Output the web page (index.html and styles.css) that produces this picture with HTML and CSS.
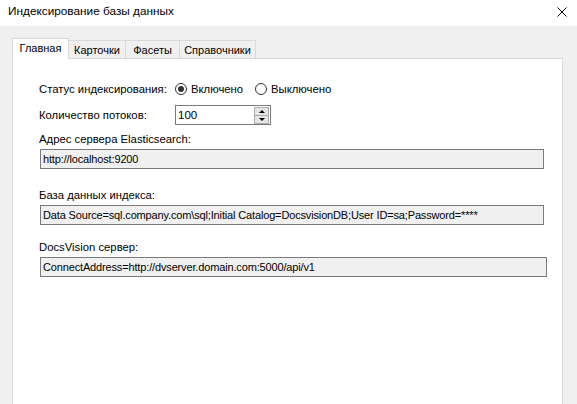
FILE: index.html
```html
<!DOCTYPE html>
<html lang="ru">
<head>
<meta charset="utf-8">
<title>Индексирование базы данных</title>
<link rel="stylesheet" href="styles.css">
</head>
<body>
<div class="window">
  <div class="titlebar">
    <span class="title">Индексирование базы данных</span>
    <svg class="close" width="10" height="10" viewBox="0 0 10 10"><path d="M0.5 0.5 L9.5 9.5 M9.5 0.5 L0.5 9.5" stroke="#000" stroke-width="1" fill="none"/></svg>
  </div>
  <div class="client">
    <div class="tabs">
      <div class="tab active t1">Главная</div>
      <div class="tab t2">Карточки</div>
      <div class="tab t3">Фасеты</div>
      <div class="tab t4">Справочники</div>
      <div class="tab-fill"></div>
    </div>
    <div class="panel">
      <div class="row status">
        <span class="lbl">Статус индексирования:</span>
        <span class="radio r1"><span class="circle checked"></span><span>Включено</span></span>
        <span class="radio r2"><span class="circle"></span><span>Выключено</span></span>
      </div>
      <div class="row threads">
        <span class="lbl">Количество потоков:</span>
        <div class="spin">
          <span class="spin-val">100</span>
          <div class="spin-btns">
            <div class="spin-btn"><span class="arrow up"></span></div>
            <div class="spin-btn"><span class="arrow down"></span></div>
          </div>
        </div>
      </div>
      <div class="field f1">
        <div class="flabel">Адрес сервера Elasticsearch:</div>
        <div class="tbox">http://localhost:9200</div>
      </div>
      <div class="field f2">
        <div class="flabel">База данных индекса:</div>
        <div class="tbox">Data Source=sql.company.com\sql;Initial Catalog=DocsvisionDB;User ID=sa;Password=****</div>
      </div>
      <div class="field f3">
        <div class="flabel">DocsVision сервер:</div>
        <div class="tbox wide">ConnectAddress=http://dvserver.domain.com:5000/api/v1</div>
      </div>
    </div>
  </div>
</div>
</body>
</html>
```
FILE: styles.css
```css
html, body {
  margin: 0;
  padding: 0;
  width: 577px;
  height: 404px;
  overflow: hidden;
  background: #f0f0f0;
}
body {
  font-family: "Liberation Sans", Arial, sans-serif;
  font-size: 11.3px;
  line-height: 14px;
  color: #000;
}
.window {
  width: 577px;
  height: 404px;
  display: flex;
  flex-direction: column;
}
.titlebar {
  height: 26px;
  background: #fff;
  display: flex;
  align-items: flex-start;
  justify-content: space-between;
  flex: none;
}
.title {
  margin-top: 4px;
  margin-left: 8px;
  font-size: 11.8px;
}
.close {
  margin-top: 7px;
  margin-right: 10px;
}
.client {
  flex: 1;
  background: #f0f0f0;
  padding-top: 12px;
  padding-left: 12px;
  display: flex;
  flex-direction: column;
}
.tabs {
  display: flex;
  align-items: flex-end;
  width: 551px;
  flex: none;
  font-size: 11px;
}
.tab {
  box-sizing: border-box;
  height: 19px;
  text-align: center;
  border-top: 1px solid #d9d9d9;
  border-right: 1px solid #d9d9d9;
  border-bottom: 1px solid #d9d9d9;
  background: #f0f0f0;
  padding-top: 2px;
}
.tab.active {
  height: 21px;
  background: #fff;
  border-left: 1px solid #d9d9d9;
  border-bottom: none;
  padding-top: 2px;
}
.t1 { width: 57px; }
.t2 { width: 57px; }
.t3 { width: 54px; }
.t4 { width: 76px; }
.tab-fill {
  flex: 1;
  border-bottom: 1px solid #d9d9d9;
}
.panel {
  flex: 1;
  width: 551px;
  box-sizing: border-box;
  background: #fff;
  border-left: 1px solid #d9d9d9;
  border-right: 1px solid #d9d9d9;
  padding-top: 23px;
  padding-left: 26px;
}
.row {
  display: flex;
  align-items: center;
}
.lbl {
  width: 136px;
  flex: none;
}
.status {
  height: 14px;
}
.radio {
  display: flex;
  align-items: center;
  gap: 4px;
}
.r1 { width: 80px; }
.circle {
  box-sizing: border-box;
  width: 12px;
  height: 12px;
  border: 1px solid #333;
  border-radius: 50%;
  background: #fff;
  display: flex;
  align-items: center;
  justify-content: center;
}
.circle.checked::after {
  content: "";
  width: 6px;
  height: 6px;
  border-radius: 50%;
  background: #333;
}
.threads {
  margin-top: 9px;
}
.spin {
  box-sizing: border-box;
  width: 96px;
  height: 20px;
  border: 1px solid #7a7a7a;
  background: #fff;
  display: flex;
  align-items: center;
  justify-content: space-between;
  padding-left: 2px;
  padding-right: 1px;
}
.spin-val {
  font-size: 11.5px;
}
.spin-btns {
  display: flex;
  flex-direction: column;
  border: 1px solid #adadad;
  background: #e5e5e5;
}
.spin-btn {
  width: 13px;
  height: 7px;
  display: flex;
  align-items: center;
  justify-content: center;
}
.spin-btn + .spin-btn {
  border-top: 1px solid #adadad;
}
.arrow {
  width: 0;
  height: 0;
  border-left: 3px solid transparent;
  border-right: 3px solid transparent;
}
.arrow.up { border-bottom: 3px solid #000; }
.arrow.down { border-top: 3px solid #000; }
.field.f1 { margin-top: 7px; }
.field.f2 { margin-top: 19px; }
.field.f3 { margin-top: 15px; }
.flabel {
  margin-bottom: 3px;
}
.tbox {
  box-sizing: border-box;
  margin-left: 1px;
  width: 504px;
  height: 20px;
  border: 1px solid #7a7a7a;
  background: #f0f0f0;
  padding: 2px 2px 0 2px;
  white-space: nowrap;
  overflow: hidden;
  font-size: 11px;
  letter-spacing: -0.15px;
}
.tbox.wide {
  width: 507px;
}
```
